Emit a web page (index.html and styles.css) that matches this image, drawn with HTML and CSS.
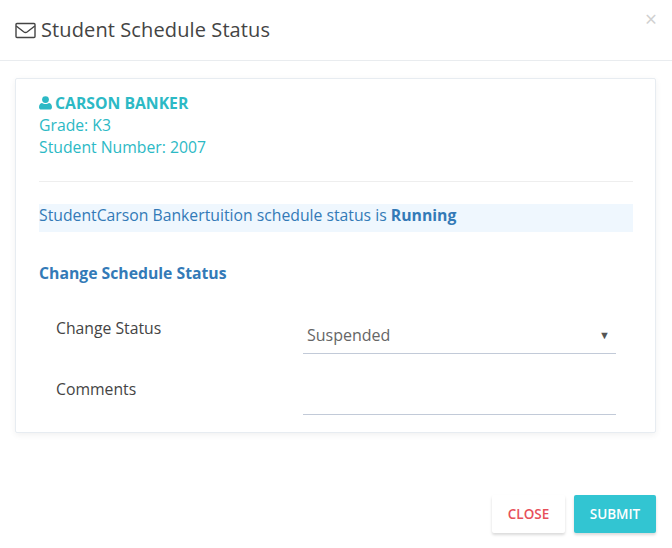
FILE: index.html
```html
<!DOCTYPE html>
<html lang="en">
<head>
<meta charset="utf-8">
<title>Student Schedule Status</title>
<link rel="stylesheet" href="styles.css">
</head>
<body>
<div class="modal">
  <header class="modal-header">
    <h4 class="modal-title">
      <svg class="mail-icon" width="21" height="17" viewBox="0 0 21 17" fill="none" stroke="#444" stroke-width="1.4"><rect x="1" y="1.5" width="19" height="14" rx="1"/><path d="M1.2 4 L8.6 9.8 Q10.5 11.2 12.4 9.8 L19.8 4"/></svg>
      <span>Student Schedule Status</span>
    </h4>
    <span class="close-x">×</span>
  </header>
  <main class="modal-body">
    <section class="card">
      <div class="student">
        <div class="student-name">
          <svg class="user-icon" width="13" height="14" viewBox="0 0 13 14" fill="#2cb9c5"><circle cx="6.5" cy="3.6" r="3.4"/><path d="M0 11.2C0 8.6 1.4 6.9 3.2 6.9 4 7.6 5.2 8 6.5 8S9 7.6 9.8 6.9C11.6 6.9 13 8.6 13 11.2 13 12.9 12 13.6 10.8 13.6H2.2C1 13.6 0 12.9 0 11.2Z"/></svg>
          <strong>CARSON BANKER</strong>
        </div>
        <div>Grade: K3</div>
        <div>Student Number: 2007</div>
      </div>
      <hr class="divider">
      <p class="status-note">StudentCarson Bankertuition schedule status is <strong>Running</strong></p>
      <h5 class="section-title">Change Schedule Status</h5>
      <form class="form">
        <div class="form-row">
          <label class="form-label">Change Status</label>
          <div class="select-field">
            <span>Suspended</span>
            <span class="caret">▼</span>
          </div>
        </div>
        <div class="form-row">
          <label class="form-label">Comments</label>
          <div class="text-field"></div>
        </div>
      </form>
    </section>
  </main>
  <footer class="modal-footer">
    <button class="btn btn-close" type="button">CLOSE</button>
    <button class="btn btn-submit" type="button">SUBMIT</button>
  </footer>
</div>
</body>
</html>
```
FILE: styles.css
```css
* { box-sizing: border-box; }
html, body { margin: 0; padding: 0; background: #fff; }
body { font-family: "Open Sans", sans-serif; font-size: 14px; color: #333; width: 672px; height: 548px; overflow: hidden; }
.modal { display: flex; flex-direction: column; height: 548px; }
.modal-header { height: 61px; border-bottom: 1px solid #e9ecef; padding: 0 15px; display: flex; align-items: flex-start; justify-content: space-between; }
.modal-title { margin: 17px 0 0; font-size: 20px; font-weight: 400; line-height: 26px; color: #444; display: flex; align-items: center; gap: 5px; letter-spacing: 0.11px; }
.mail-icon { display: block; margin-top: 1px; }
.close-x { font-size: 21px; line-height: 21px; color: #d0d0d0; margin-top: 9px; margin-right: 0; }
.modal-body { padding: 17px 16px 0 15px; }
.card { height: 355px; border: 1px solid #e7ecf1; border-radius: 2px; box-shadow: 0 2px 6px rgba(0,0,0,0.06); padding: 13px 22px 0 23px; }
.student { color: #2cb9c5; line-height: 22px; font-size: 15.75px; }
.student-name { display: flex; align-items: center; gap: 3px; }
.student-name strong { font-weight: 700; }
.divider { border: 0; border-top: 1px solid #eee; margin: 23px 0 22px; }
.status-note { margin: 0; height: 28px; line-height: 22px; background: #eff7fe; color: #337ab7; font-size: 15.75px; }
.status-note strong { font-weight: 700; }
.section-title { margin: 30px 0 0; font-size: 15.75px; line-height: 22px; font-weight: 700; color: #337ab7; }
.form { padding: 0 17px; margin-top: 26px; }
.form-row { display: flex; height: 61px; }
.form-label { width: 247px; line-height: 22px; padding-top: 7px; font-size: 15.75px; color: #444; }
.select-field { flex: 1; height: 44px; border-bottom: 1px solid #c2cad8; display: flex; justify-content: space-between; align-items: center; padding: 6px 6px 0 4px; color: #666; font-size: 16px; }
.caret { font-size: 11px; color: #555; }
.text-field { flex: 1; height: 44px; border-bottom: 1px solid #c2cad8; }
.modal-footer { display: flex; justify-content: flex-end; gap: 9px; padding: 62px 16px 0 0; }
.btn { height: 38px; border: 0; border-radius: 2px; font-family: "Open Sans", sans-serif; font-size: 13.5px; font-weight: 600; box-shadow: 0 2px 3px rgba(0,0,0,0.15); padding: 0 0 1px; }
.btn-close { width: 73px; background: #fff; color: #e7505a; }
.btn-submit { width: 82px; background: #32c5d2; color: #fff; }
```
